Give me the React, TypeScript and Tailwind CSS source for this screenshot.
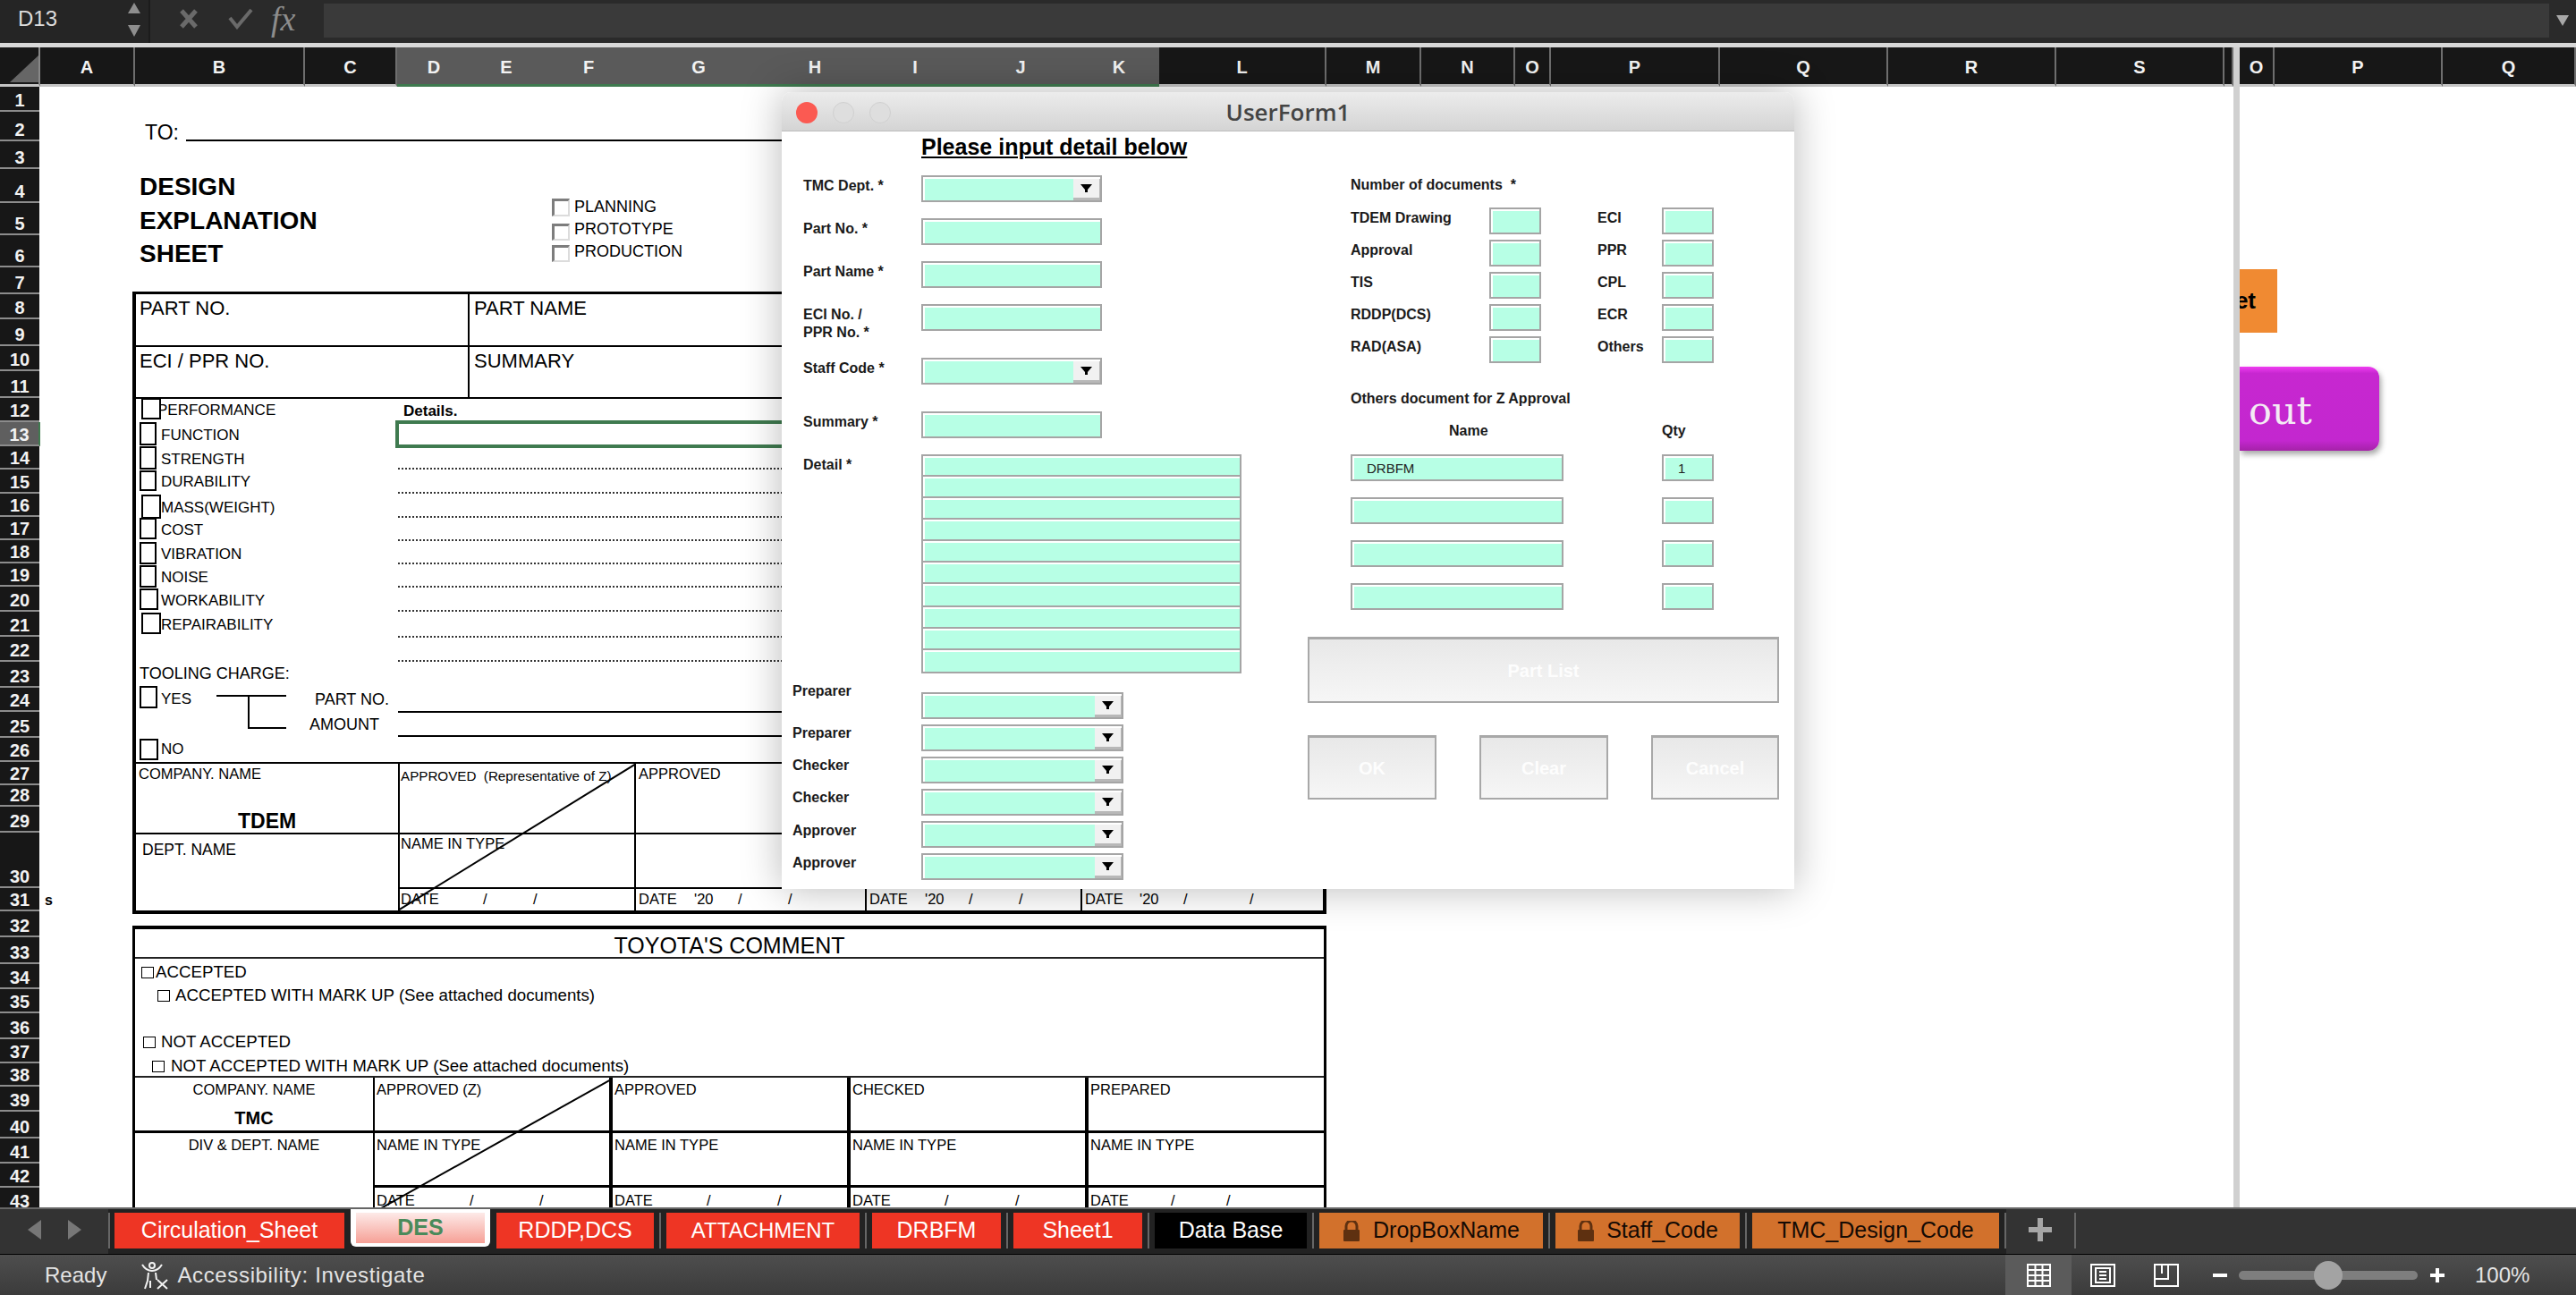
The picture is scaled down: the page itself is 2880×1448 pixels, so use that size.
import React, { FC, PropsWithChildren } from "react";

const columns = [
  ["A", 106], ["B", 190], ["C", 103], ["D", 82], ["E", 80], ["F", 104], ["G", 142], ["H", 118], ["I", 106], ["J", 130], ["K", 90],
  ["L", 187], ["M", 106], ["N", 105], ["O", 40], ["P", 189], ["Q", 188], ["R", 188], ["S", 188], ["", 10],
] as const;
const rightColumns = [["O", 39], ["P", 188], ["Q", 149]] as const;
const selectedColumns = "DEFGHIJK";

const rowEdges = [
  97, 125, 158, 189, 227, 263, 299, 329, 357, 387, 415, 445, 472, 499, 525, 552, 578, 604, 630, 656, 684, 712, 740, 769,
  796, 825, 852, 878, 902, 931, 993, 1019, 1048, 1078, 1106, 1133, 1162, 1189, 1215, 1243, 1273, 1301, 1328, 1356,
];

const RowHeaders = () => (
  <div className="w-[45px] shrink-0 bg-white overflow-hidden">
    {rowEdges.slice(1).map((edge, i) => (
      <div
        key={i}
        style={{ height: edge - rowEdges[i] }}
        className={`flex items-end justify-center pb-[1px] border-b-2 border-[#8c8c8c] text-[20px] leading-[20px] font-bold text-[#f2f2f2] ${
          i + 1 === 13 ? "bg-[#5f5f5f] border-r-2 border-r-[#3f7a4f]" : "bg-[#171717] mr-px"
        }`}
      >
        {i + 1}
      </div>
    ))}
  </div>
);

const ColumnHeader: FC<{ name: string; width: number; selected?: boolean }> = ({ name, width, selected }) => (
  <div
    style={{ width }}
    className={`shrink-0 flex items-center justify-center pt-[3px] text-[20px] font-bold text-[#f2f2f2] ${
      selected ? "bg-[#5a5a5a] border-b-[3px] border-[#3f7a4f]" : "bg-[#171717] border-r-2 border-r-[#6e6e6e] border-b-[3px] border-b-[#c4c4c4]"
    }`}
  >
    {name}
  </div>
);

const FormulaBar = () => (
  <div className="h-[48px] shrink-0 flex bg-[#2a2a2a]">
    <div className="w-[168px] flex items-center justify-between bg-[#252525] border-r-2 border-[#1c1c1c] pl-[20px] pr-[8px]">
      <span className="text-[24px] text-[#dcdcdc] -mt-[6px]">D13</span>
      <svg width="16" height="38" viewBox="0 0 16 38" className="-mt-[4px]">
        <path d="M8 0l7 12H1z M1 25h14l-7 13z" fill="#8e8e8e" />
      </svg>
    </div>
    <div className="w-[194px] relative flex items-center -mt-[6px]">
      <svg width="24" height="24" viewBox="0 0 24 24" className="ml-[31px]">
        <path d="M4 3l16 18M20 3L4 21" stroke="#6a6a6a" strokeWidth="5" />
      </svg>
      <svg width="30" height="24" viewBox="0 0 30 24" className="ml-[31px]">
        <path d="M3 11l8 10L27 2" stroke="#6a6a6a" strokeWidth="4" fill="none" />
      </svg>
      <span className="ml-[19px] font-['Liberation_Serif',serif] italic text-[38px] leading-[38px] text-[#8d8d8d]">fx</span>
    </div>
    <div className="flex-1 h-[38px] mt-[4px] bg-[#3a3a3a]" />
    <div className="w-[30px] flex justify-center pt-[17px]">
      <svg width="14" height="12" viewBox="0 0 14 12">
        <path d="M0 0h14L7 12z" fill="#a8a8a8" />
      </svg>
    </div>
  </div>
);

const Outline: FC<{ className: string }> = ({ className }) => (
  <div className={`relative z-10 shrink-0 bg-white border-2 border-black ${className}`} />
);

const checks = [
  { label: "PERFORMANCE", row: "h-[22px]", box: "ml-[6px] w-[22px] h-[24px]", text: "-ml-[4px]" },
  { label: "FUNCTION", row: "h-[34px]", box: "ml-[4px] w-[19px] h-[26px]", text: "" },
  { label: "STRENGTH", row: "h-[20px]", box: "ml-[4px] w-[19px] h-[26px]", text: "" },
  { label: "DURABILITY", row: "h-[30px]", box: "ml-[4px] w-[19px] h-[23px]", text: "" },
  { label: "MASS(WEIGHT)", row: "h-[28px]", box: "ml-[6px] w-[22px] h-[27px]", text: "" },
  { label: "COST", row: "h-[22px]", box: "ml-[4px] w-[19px] h-[24px]", text: "" },
  { label: "VIBRATION", row: "h-[32px]", box: "ml-[4px] w-[19px] h-[25px]", text: "" },
  { label: "NOISE", row: "h-[20px]", box: "ml-[4px] w-[19px] h-[25px]", text: "" },
  { label: "WORKABILITY", row: "h-[32px]", box: "ml-[4px] w-[21px] h-[24px] border-[#444]", text: "" },
  { label: "REPAIRABILITY", row: "h-[22px]", box: "ml-[6px] w-[22px] h-[24px]", text: "" },
];

const dotted = ["h-[24px]", "h-[27px]", "h-[27px]", "h-[26px]", "h-[26px]", "h-[26px]", "h-[27px]", "h-[29px]", "h-[27px]"];

const CheckList = () => (
  <div className="w-[293px] shrink-0 flex flex-col text-[17px] leading-[18px]">
    {checks.map((c) => (
      <div key={c.label} className={`flex items-center ${c.row}`}>
        <div className="w-[28px] shrink-0">
          <Outline className={c.box} />
        </div>
        <span className={`pt-[3px] ${c.text}`}>{c.label}</span>
      </div>
    ))}
    <div className="mt-[37px] text-[18px] leading-[16px] ml-[4px]">TOOLING CHARGE:</div>
    <div className="flex mt-[5px] h-[58px]">
      <div className="w-[90px] shrink-0 flex items-center h-[26px]">
        <div className="w-[28px] shrink-0">
          <Outline className="ml-[4px] w-[20px] h-[25px]" />
        </div>
        <span className="pt-[5px]">YES</span>
      </div>
      <svg width="78" height="40" viewBox="0 0 78 40" className="mt-[10px] shrink-0">
        <path d="M0 2h78M36 2v36h42" stroke="#000" strokeWidth="2" fill="none" />
      </svg>
      <div className="flex flex-col text-[18px]">
        <span className="ml-[32px] mt-[7px]">PART NO.</span>
        <span className="ml-[26px] mt-[10px]">AMOUNT</span>
      </div>
    </div>
    <div className="flex items-center h-[25px] mt-px">
      <div className="w-[28px] shrink-0">
        <Outline className="ml-[4px] w-[21px] h-[24px] border-[#555]" />
      </div>
      NO
    </div>
  </div>
);

const DetailsColumn = () => (
  <div className="flex-1 flex flex-col">
    <div className="h-[24px] pl-[6px] pt-[5px] text-[17px] leading-[18px] font-bold">Details.</div>
    <div className="h-[31px] -ml-[3px] mr-[183px] border-[4px] border-[#3f7a4f]" />
    {dotted.map((h, i) => (
      <div key={i} className={`${h} border-b-2 border-dotted border-[#333]`} />
    ))}
    <div className="h-[57px] border-b-2 border-black" />
    <div className="h-[27px] border-b-2 border-black" />
  </div>
);

const Dates: FC<{ items: [string, string][]; className?: string }> = ({ items, className = "pl-[3px]" }) => (
  <div className={`flex text-[16.5px] leading-[20px] pt-[1px] ${className}`}>
    {items.map(([text, width], i) => (
      <span key={i} className={width}>
        {text}
      </span>
    ))}
  </div>
);

const DesignTable = () => (
  <div className="w-[1335px] border-x-4 border-t-[3px] border-b-4 border-black flex flex-col">
    <div className="h-[59px] flex border-b-2 border-black text-[22px] leading-[26px]">
      <div className="w-[373px] pl-[4px] pt-[3px] border-r-2 border-black">PART NO.</div>
      <div className="pl-[5px] pt-[3px]">PART NAME</div>
    </div>
    <div className="h-[58px] flex border-b-2 border-black text-[22px] leading-[26px]">
      <div className="w-[373px] pl-[4px] pt-[3px] border-r-2 border-black">ECI / PPR NO.</div>
      <div className="pl-[5px] pt-[3px]">SUMMARY</div>
    </div>
    <div className="h-[408px] flex border-b-2 border-black">
      <CheckList />
      <DetailsColumn />
    </div>
    <div className="relative grid grid-cols-[293px_266px_258px_241px_269px] grid-rows-[79px_61px_24px] text-[16.5px] leading-[20px]">
      <div className="border-b-2 border-black flex flex-col pl-[3px] pt-[1px]">
        COMPANY. NAME
        <span className="mt-[30px] ml-[111px] text-[23px] leading-[26px] font-bold">TDEM</span>
      </div>
      <div className="border-x-2 border-b-2 border-black pl-[1px] pt-[4px] text-[15.2px]">APPROVED&nbsp; (Representative of Z)</div>
      <div className="border-r-2 border-b-2 border-black pl-[3px] pt-[1px]">APPROVED</div>
      <div className="border-r-2 border-b-2 border-black" />
      <div className="border-b-2 border-black" />
      <div className="row-span-2 pl-[7px] pt-[7px] text-[17.5px]">DEPT. NAME</div>
      <div className="border-x-2 border-b-2 border-black pl-[1px]">NAME IN TYPE</div>
      <div className="border-r-2 border-b-2 border-black" />
      <div className="border-r-2 border-b-2 border-black" />
      <div className="border-b-2 border-black" />
      <div className="border-x-2 border-black">
        <Dates className="pl-[1px]" items={[["DATE", "w-[92px]"], ["/", "w-[56px]"], ["/", ""]]} />
      </div>
      <div className="border-r-2 border-black">
        <Dates items={[["DATE", "w-[62px]"], ["'20", "w-[49px]"], ["/", "w-[56px]"], ["/", ""]]} />
      </div>
      <div className="border-r-2 border-black">
        <Dates items={[["DATE", "w-[62px]"], ["'20", "w-[49px]"], ["/", "w-[56px]"], ["/", ""]]} />
      </div>
      <div>
        <Dates items={[["DATE", "w-[61px]"], ["'20", "w-[49px]"], ["/", "w-[74px]"], ["/", ""]]} />
      </div>
      <svg width="266" height="164" viewBox="0 0 266 164" className="absolute left-[293px] top-0">
        <path d="M266 0L0 164" stroke="#000" strokeWidth="2" />
      </svg>
    </div>
  </div>
);

const CommentLine: FC<PropsWithChildren<{ className: string }>> = ({ className, children }) => (
  <div className={`flex items-center text-[18.7px] leading-[18px] ${className}`}>
    <div className="h-[13px] w-[14px] border border-black shrink-0" />
    {children}
  </div>
);

const tmcCols = ["APPROVED (Z)", "APPROVED", "CHECKED", "PREPARED"];
const tmcDates: [string, string][][] = [
  [["DATE", "w-[104px]"], ["/", "w-[78px]"], ["/", ""]],
  [["DATE", "w-[103px]"], ["/", "w-[79px]"], ["/", ""]],
  [["DATE", "w-[103px]"], ["/", "w-[79px]"], ["/", ""]],
  [["DATE", "w-[90px]"], ["/", "w-[62px]"], ["/", ""]],
];

const CommentTable = () => (
  <div className="w-[1335px] border-x-[3px] border-t-4 border-black flex flex-col">
    <div className="h-[31px] flex items-center justify-center text-[25px] leading-[28px] pt-[5px]">TOYOTA'S COMMENT</div>
    <div className="h-[135px] border-y-2 border-[#222] flex flex-col">
      <CommentLine className="mt-[6px] ml-[7px] gap-[2px]">ACCEPTED</CommentLine>
      <CommentLine className="mt-[8px] ml-[25px] gap-[6px]">ACCEPTED WITH MARK UP (See attached documents)</CommentLine>
      <CommentLine className="mt-[34px] ml-[9px] gap-[6px]">NOT ACCEPTED</CommentLine>
      <CommentLine className="mt-[9px] ml-[19px] gap-[7px]">NOT ACCEPTED WITH MARK UP (See attached documents)</CommentLine>
    </div>
    <div className="relative grid grid-cols-[266px_266px_266px_266px_1fr] grid-rows-[62px_61px_40px] text-[16.5px] leading-[20px]">
      <div className="border-b-[3px] border-black flex flex-col items-center pt-[3px]">
        COMPANY. NAME
        <span className="mt-[12px] text-[20px] font-bold">TMC</span>
      </div>
      {tmcCols.map((name, i) => (
        <div key={name} className={`border-b-[3px] border-black pl-[2px] pt-[3px] ${i < 3 ? "border-r-2" : ""} border-l-2`}>
          {name}
        </div>
      ))}
      <div className="row-span-2 text-center pt-[3px]">DIV &amp; DEPT. NAME</div>
      {tmcCols.map((name, i) => (
        <div key={name} className={`border-b-[3px] border-black pl-[2px] pt-[3px] ${i < 3 ? "border-r-2" : ""} border-l-2`}>
          NAME IN TYPE
        </div>
      ))}
      {tmcDates.map((items, i) => (
        <div key={i} className={`border-black pt-[3px] ${i < 3 ? "border-r-2" : ""} border-l-2`}>
          <Dates items={items} className="pl-[2px]" />
        </div>
      ))}
      <svg width="266" height="146" viewBox="0 0 266 146" className="absolute left-[266px] top-0">
        <path d="M266 2L9 146" stroke="#000" strokeWidth="2" />
      </svg>
    </div>
  </div>
);

const Sheet = () => (
  <div className="h-[1253px] shrink-0 flex overflow-hidden text-black">
    <RowHeaders />
    <div className="w-[2452px] shrink-0 bg-white relative pl-[103px]">
      <span className="absolute left-[5px] top-[900px] text-[16px] leading-[20px] font-bold">s</span>
      <div className="flex items-end h-[24px] mt-[38px] pl-[14px] text-[23px] leading-[22px]">
        TO:
        <div className="w-[680px] ml-[8px] mb-px border-b-2 border-black" />
      </div>
      <div className="flex h-[167px]">
        <div className="w-[469px] shrink-0 pl-[8px] pt-[31px] text-[28px] leading-[37.5px] font-bold">
          <div>DESIGN</div>
          <div>EXPLANATION</div>
          <div>SHEET</div>
        </div>
        <div className="pt-[63px] flex flex-col text-[18px] leading-[18px]">
          {[
            ["PLANNING", "", "h-[20px]"],
            ["PROTOTYPE", "mt-[3px]", "h-[19px]"],
            ["PRODUCTION", "mt-[2px]", "h-[19px]"],
          ].map(([label, offset, height]) => (
            <div key={label} className="flex h-[25px] items-start">
              <div className={`w-[20px] border-2 border-t-[3px] border-l-[3px] border-t-[#7d7d7d] border-l-[#7d7d7d] border-r-[#dcdcdc] border-b-[#dcdcdc] ${offset} ${height}`} />
              <span className="ml-[5px]">{label}</span>
            </div>
          ))}
        </div>
      </div>
      <DesignTable />
      <div className="h-[13px]" />
      <CommentTable />
    </div>
    <div className="w-[7px] shrink-0 bg-[#d0d0d0]" />
    <div className="flex-1 bg-white overflow-hidden">
      <div className="mt-[204px] h-[71px] w-[42px] bg-[#f08a32] flex items-center justify-end pr-[24px] text-[26px] font-bold">et</div>
      <div className="mt-[38px] h-[94px] w-[156px] rounded-r-[12px] pl-[10px] pt-[5px] flex items-center bg-[linear-gradient(#f03cf2_0,#c727d0_8%,#c327cf_88%,#a522a8_100%)] shadow-[2px_4px_6px_rgba(0,0,0,0.35)] font-['DejaVu_Serif',serif] text-[43px] text-[#f4eaf4]">
        out
      </div>
    </div>
  </div>
);

const DropArrow = () => (
  <svg width="13" height="9" viewBox="0 0 13 9">
    <path d="M0 0h13L8 6v3H5V6z" fill="#000" />
  </svg>
);

const Field: FC<{ className: string; drop?: boolean; value?: string }> = ({ className, drop, value }) => (
  <div className={`flex shrink-0 border-2 border-[#a5a5a5] ${className}`}>
    <div className="flex-1 flex items-center pl-[14px] border-t-2 border-l-2 border-white bg-[#b7ffe5] text-[15px] text-[#222]">{value}</div>
    {drop && (
      <div className="w-[30px] mt-[2px] flex items-center justify-center bg-[#f1f1f1] border-b-[3px] border-r border-[#b8b8b8]">
        <DropArrow />
      </div>
    )}
  </div>
);

const Label: FC<PropsWithChildren<{ className?: string }>> = ({ className = "", children }) => (
  <div className={`text-[16px] leading-[20px] font-bold text-[#1a1a1a] ${className}`}>{children}</div>
);

const FormRow: FC<PropsWithChildren<{ label: React.ReactNode; className: string }>> = ({ label, className, children }) => (
  <div className={`flex ${className}`}>
    <Label className="w-[132px] shrink-0 pt-[2px]">{label}</Label>
    {children}
  </div>
);

const detailRows = ["h-[25px]", "h-[24px]", "h-[24px]", "h-[24px]", "h-[24px]", "h-[24px]", "h-[26px]", "h-[24px]", "h-[24px]", "h-[26px]"];

const approvers = [
  { label: "Preparer", offset: "-mt-[11px]" },
  { label: "Preparer", offset: "mt-[0px]" },
  { label: "Checker", offset: "mt-[0px]" },
  { label: "Checker", offset: "mt-[0px]" },
  { label: "Approver", offset: "mt-[1px]" },
  { label: "Approver", offset: "mt-[1px]" },
];

const docCounts = [
  ["TDEM Drawing", "ECI"],
  ["Approval", "PPR"],
  ["TIS", "CPL"],
  ["RDDP(DCS)", "ECR"],
  ["RAD(ASA)", "Others"],
];

const GreyButton: FC<PropsWithChildren<{ className: string }>> = ({ className, children }) => (
  <div className={`flex items-center justify-center border-2 border-[#a8a8a8] border-t-[3px] bg-[linear-gradient(#e8e8e8,#f6f6f6)] text-[20px] font-bold text-[#fdfdfd] ${className}`}>
    {children}
  </div>
);

const LeftFormColumn = () => (
  <div className="w-[588px] shrink-0 flex flex-col">
    <div className="ml-[156px] mt-[6px] h-[43px] text-[25px] leading-[22px] font-bold underline underline-offset-2 text-black">
      Please input detail below
    </div>
    <div className="pl-[24px] flex flex-col">
      <FormRow label="TMC Dept.  *" className="h-[48px]"><Field className="w-[202px] h-[30px]" drop /></FormRow>
      <FormRow label="Part No. *" className="h-[48px]"><Field className="w-[202px] h-[30px]" /></FormRow>
      <FormRow label="Part Name *" className="h-[48px]"><Field className="w-[202px] h-[30px]" /></FormRow>
      <FormRow label={<>ECI No. /<br />PPR No.  *</>} className="h-[60px]"><Field className="w-[202px] h-[30px]" /></FormRow>
      <FormRow label="Staff Code  *" className="h-[60px]"><Field className="w-[202px] h-[30px]" drop /></FormRow>
      <FormRow label="Summary  *" className="h-[48px]"><Field className="w-[202px] h-[30px]" /></FormRow>
      <FormRow label="Detail  *" className="h-[245px]">
        <div className="flex flex-col">
          {detailRows.map((h, i) => (
            <Field key={i} className={`w-[358px] ${h} ${i > 0 ? "border-t-0" : ""}`} />
          ))}
        </div>
      </FormRow>
    </div>
    <div className="pl-[12px] mt-[21px] flex flex-col gap-[6px]">
      {approvers.map((a, i) => (
        <div key={i} className="flex h-[30px]">
          <Label className={`w-[144px] shrink-0 ${a.offset}`}>{a.label}</Label>
          <Field className="w-[226px] h-[30px]" drop />
        </div>
      ))}
    </div>
  </div>
);

const RightFormColumn = () => (
  <div className="flex-1 flex flex-col">
    <div className="pl-[48px]">
      <Label className="mt-[50px] h-[35px]">Number of documents&nbsp; *</Label>
      <div className="flex flex-col gap-[6px]">
        {docCounts.map(([a, b]) => (
          <div key={a} className="flex h-[30px]">
            <Label className="w-[155px] pt-[2px]">{a}</Label>
            <Field className="w-[58px] h-[30px]" />
            <Label className="w-[72px] ml-[63px] pt-[2px]">{b}</Label>
            <Field className="w-[58px] h-[30px]" />
          </div>
        ))}
      </div>
      <Label className="mt-[30px]">Others document for Z Approval</Label>
      <div className="flex mt-[16px] h-[36px]">
        <Label className="w-[348px] pl-[110px]">Name</Label>
        <Label>Qty</Label>
      </div>
      <div className="flex flex-col gap-[18px]">
        {["DRBFM", "", "", ""].map((value, i) => (
          <div key={i} className="flex h-[30px]">
            <Field className="w-[238px] h-[30px]" value={value} />
            <Field className="w-[58px] h-[30px] ml-[110px]" value={value ? "1" : ""} />
          </div>
        ))}
      </div>
    </div>
    <GreyButton className="w-[527px] h-[74px] mt-[30px]">Part List</GreyButton>
    <div className="flex w-[527px] justify-between mt-[36px]">
      <GreyButton className="w-[144px] h-[72px]">OK</GreyButton>
      <GreyButton className="w-[144px] h-[72px]">Clear</GreyButton>
      <GreyButton className="w-[143px] h-[72px]">Cancel</GreyButton>
    </div>
  </div>
);

const UserForm = () => (
  <div className="absolute left-[874px] top-[103px] w-[1132px] h-[891px] flex flex-col rounded-t-[10px] bg-white shadow-[0_0_45px_rgba(0,0,0,0.28)]">
    <div className="relative h-[44px] shrink-0 flex items-center justify-center rounded-t-[10px] border-b border-[#bdbdbd] bg-[linear-gradient(#ececec,#d4d4d4)]">
      <div className="absolute left-[16px] top-[11px] flex gap-[17px]">
        <div className="w-[24px] h-[24px] rounded-full bg-[#fb5a52]" />
        <div className="w-[24px] h-[24px] rounded-full bg-[#dedede] border border-[#d0d0d0]" />
        <div className="w-[24px] h-[24px] rounded-full bg-[#dedede] border border-[#d0d0d0]" />
      </div>
      <span className="pt-[2px] font-['Open_Sans',sans-serif] font-semibold text-[26px] text-[#444]">UserForm1</span>
    </div>
    <div className="flex-1 flex">
      <LeftFormColumn />
      <RightFormColumn />
    </div>
  </div>
);

const Lock = () => (
  <svg width="20" height="23" viewBox="0 0 20 23" className="shrink-0">
    <path d="M4 11V6a6 6 0 0 1 12 0v5" stroke="#5e3010" strokeWidth="3" fill="none" />
    <rect x="1" y="10" width="18" height="13" rx="1" fill="#5e3010" />
  </svg>
);

const TabGap = () => <div className="w-[2px] h-[40px] mx-[6px] shrink-0 bg-[#666]" />;

const Tab: FC<PropsWithChildren<{ className: string }>> = ({ className, children }) => (
  <div className={`h-[40px] shrink-0 flex items-center justify-center text-[25px] ${className}`}>{children}</div>
);

const TabBar = () => (
  <div className="h-[53px] shrink-0 flex border-t-2 border-[#666] border-b border-b-black bg-[#333]">
    <div className="w-[121px] shrink-0 flex items-center justify-center gap-[30px] pb-[4px]">
      <svg width="15" height="22" viewBox="0 0 15 22"><path d="M15 0v22L0 11z" fill="#777" /></svg>
      <svg width="15" height="22" viewBox="0 0 15 22"><path d="M0 0v22l15-11z" fill="#777" /></svg>
    </div>
    <div className="flex items-start pt-[4px] bg-[#222] relative">
      <div className="w-[2px] h-[40px] mr-[5px] shrink-0 bg-[#666]" />
      <Tab className="w-[257px] bg-[#ee3524] text-white">Circulation_Sheet</Tab>
      <div className="w-[156px] h-[42px] -mt-[4px] mx-[7px] shrink-0 px-[6px] pt-[4px] bg-white rounded-b-[6px]">
        <div className="h-[34px] flex items-center justify-center bg-[linear-gradient(#fdeae8,#f6a096)] text-[25px] font-bold text-[#4a8a5a]">DES</div>
      </div>
      <Tab className="w-[176px] bg-[#ee3524] text-white">RDDP,DCS</Tab>
      <TabGap />
      <Tab className="w-[216px] bg-[#ee3524] text-white"><span className="text-[24px]">ATTACHMENT</span></Tab>
      <TabGap />
      <Tab className="w-[144px] bg-[#ee3524] text-white">DRBFM</Tab>
      <TabGap />
      <Tab className="w-[144px] bg-[#ee3524] text-white">Sheet1</Tab>
      <TabGap />
      <Tab className="w-[170px] bg-black text-white">Data Base</Tab>
      <TabGap />
      <Tab className="w-[250px] gap-[14px] bg-[#d2712c] text-[#140a04]"><Lock />DropBoxName</Tab>
      <TabGap />
      <Tab className="w-[206px] gap-[13px] bg-[#d2712c] text-[#140a04]"><Lock />Staff_Code</Tab>
      <TabGap />
      <Tab className="w-[276px] bg-[#d2712c] text-[#140a04]">TMC_Design_Code</Tab>
      <div className="w-[2px] h-[40px] ml-[6px] shrink-0 bg-[#666]" />
    </div>
    <div className="w-[76px] shrink-0 flex items-center justify-center pb-[4px]">
      <svg width="26" height="26" viewBox="0 0 26 26"><path d="M10 0h6v10h10v6H16v10h-6V16H0v-6h10z" fill="#a6a6a6" /></svg>
    </div>
    <div className="w-[2px] h-[40px] mt-[4px] bg-[#666]" />
  </div>
);

const StatusBar = () => (
  <div className="h-[45px] shrink-0 flex items-center bg-[linear-gradient(#4e4e4e,#3b3b3b)] text-[24px] text-[#e4e4e4]">
    <span className="ml-[50px]">Ready</span>
    <svg width="34" height="32" viewBox="0 0 34 32" className="ml-[38px]" fill="none" stroke="#f2f2f2" strokeWidth="2">
      <circle cx="13" cy="5" r="3" />
      <path d="M2 4c3 5 7 7 11 7s8-2 11-7M9 13l-1 9-3 9M17 13l1 8" />
      <path d="M19 21l11 10M30 21L19 31M11 22v8" />
    </svg>
    <span className="ml-[7px] tracking-[0.65px]">Accessibility: Investigate</span>
    <div className="ml-auto h-full w-[74px] flex items-center justify-center bg-[#5b5b5b]">
      <svg width="27" height="26" viewBox="0 0 27 26" fill="none" stroke="#fff" strokeWidth="2">
        <path d="M1 1h25v24H1zM9.5 1v24M17.5 1v24M1 7h25M1 13h25M1 19h25" />
      </svg>
    </div>
    <div className="w-[564px] shrink-0 pl-[21px] flex items-center">
      <svg width="28" height="26" viewBox="0 0 28 26" fill="none" stroke="#fff" strokeWidth="2">
        <path d="M1 1h26v24H1zM6 5h16v16H6zM10 9h8M10 13h8M10 17h8" />
      </svg>
      <svg width="28" height="26" viewBox="0 0 28 26" fill="none" stroke="#fff" strokeWidth="2" className="ml-[43px]">
        <path d="M1 1h26v24H1zM1 17h15V1M16 17M9 1v10" />
      </svg>
      <div className="w-[16px] h-[4px] bg-white ml-[38px]" />
      <div className="relative w-[200px] h-[10px] ml-[13px] rounded-full bg-[#7e7e7e]">
        <div className="absolute left-[84px] -top-[11px] w-[32px] h-[32px] rounded-full bg-[#a3a3a3]" />
      </div>
      <svg width="16" height="16" viewBox="0 0 16 16" className="ml-[14px]"><path d="M6 0h4v6h6v4h-6v6H6v-6H0V6h6z" fill="#fff" /></svg>
      <span className="ml-[34px] text-[24px]">100%</span>
    </div>
  </div>
);

export default function App() {
  return (
    <div className="relative w-[2880px] h-[1448px] flex flex-col overflow-hidden bg-white font-['Liberation_Sans',Arial,sans-serif]">
      <FormulaBar />
      <div className="h-[5px] shrink-0 bg-[#d8d8d8]" />
      <div className="h-[44px] shrink-0 flex">
        <div className="w-[45px] shrink-0 bg-[#171717] border-b-[3px] border-[#c4c4c4] border-r-2 border-r-[#888] flex items-end justify-end">
          <svg width="34" height="32" viewBox="0 0 34 32"><path d="M34 0v30H2z" fill="#666" /></svg>
        </div>
        {columns.map(([name, width], i) => (
          <ColumnHeader key={i} name={name} width={width} selected={selectedColumns.includes(name) && i < 11 && name !== ""} />
        ))}
        <div className="w-[7px] shrink-0 bg-[#d0d0d0]" />
        {rightColumns.map(([name, width]) => (
          <ColumnHeader key={name} name={name} width={width} />
        ))}
      </div>
      <Sheet />
      <TabBar />
      <StatusBar />
      <UserForm />
    </div>
  );
}
